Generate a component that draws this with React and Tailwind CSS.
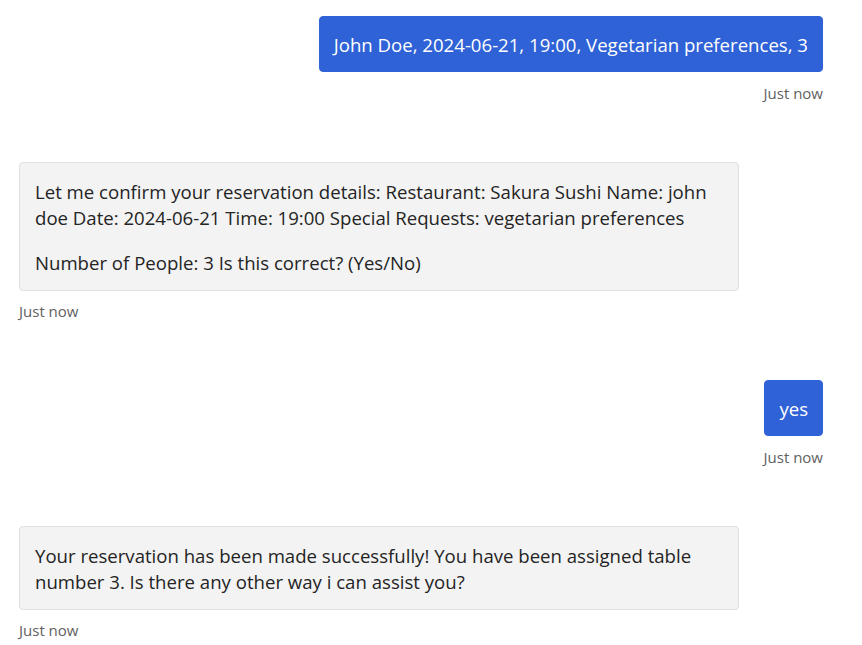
const font = { fontFamily: "'Open Sans', 'Noto Sans', sans-serif" };

function UserMessage({ text }) {
  return (
    <div className="flex flex-col items-end">
      <div className="max-w-[720px] rounded-[4px] border border-[#2f62d6] bg-[#2f62d6] px-[14px] pt-[15px] pb-[13px] text-[18.6px] leading-[26px] text-white">
        {text}
      </div>
      <div className="mt-[11px] text-[15px] leading-[20px] text-[#616161]">Just now</div>
    </div>
  );
}

function BotMessage({ paragraphs }) {
  return (
    <div className="flex flex-col items-start">
      <div className="w-[720px] rounded-[4px] border border-[#e0e0e0] bg-[#f3f3f3] px-[15px] pt-[16px] pb-[14px] text-[18.6px] leading-[26px] text-[#242424]">
        {paragraphs.map((p, i) => (
          <p key={i} className={i > 0 ? "mt-[19px]" : ""}>
            {p}
          </p>
        ))}
      </div>
      <div className="mt-[10px] text-[15px] leading-[20px] text-[#616161]">Just now</div>
    </div>
  );
}

export default function App() {
  return (
    <div className="min-h-screen bg-white" style={font}>
      <div className="flex flex-col gap-[59px] pl-[19px] pr-[39px] pt-[16px] pb-6">
        <UserMessage text="John Doe, 2024-06-21, 19:00, Vegetarian preferences, 3" />
        <BotMessage
          paragraphs={[
            "Let me confirm your reservation details: Restaurant: Sakura Sushi Name: john doe Date: 2024-06-21 Time: 19:00 Special Requests: vegetarian preferences",
            "Number of People: 3 Is this correct? (Yes/No)",
          ]}
        />
        <UserMessage text="yes" />
        <BotMessage
          paragraphs={[
            "Your reservation has been made successfully! You have been assigned table number 3. Is there any other way i can assist you?",
          ]}
        />
      </div>
    </div>
  );
}
